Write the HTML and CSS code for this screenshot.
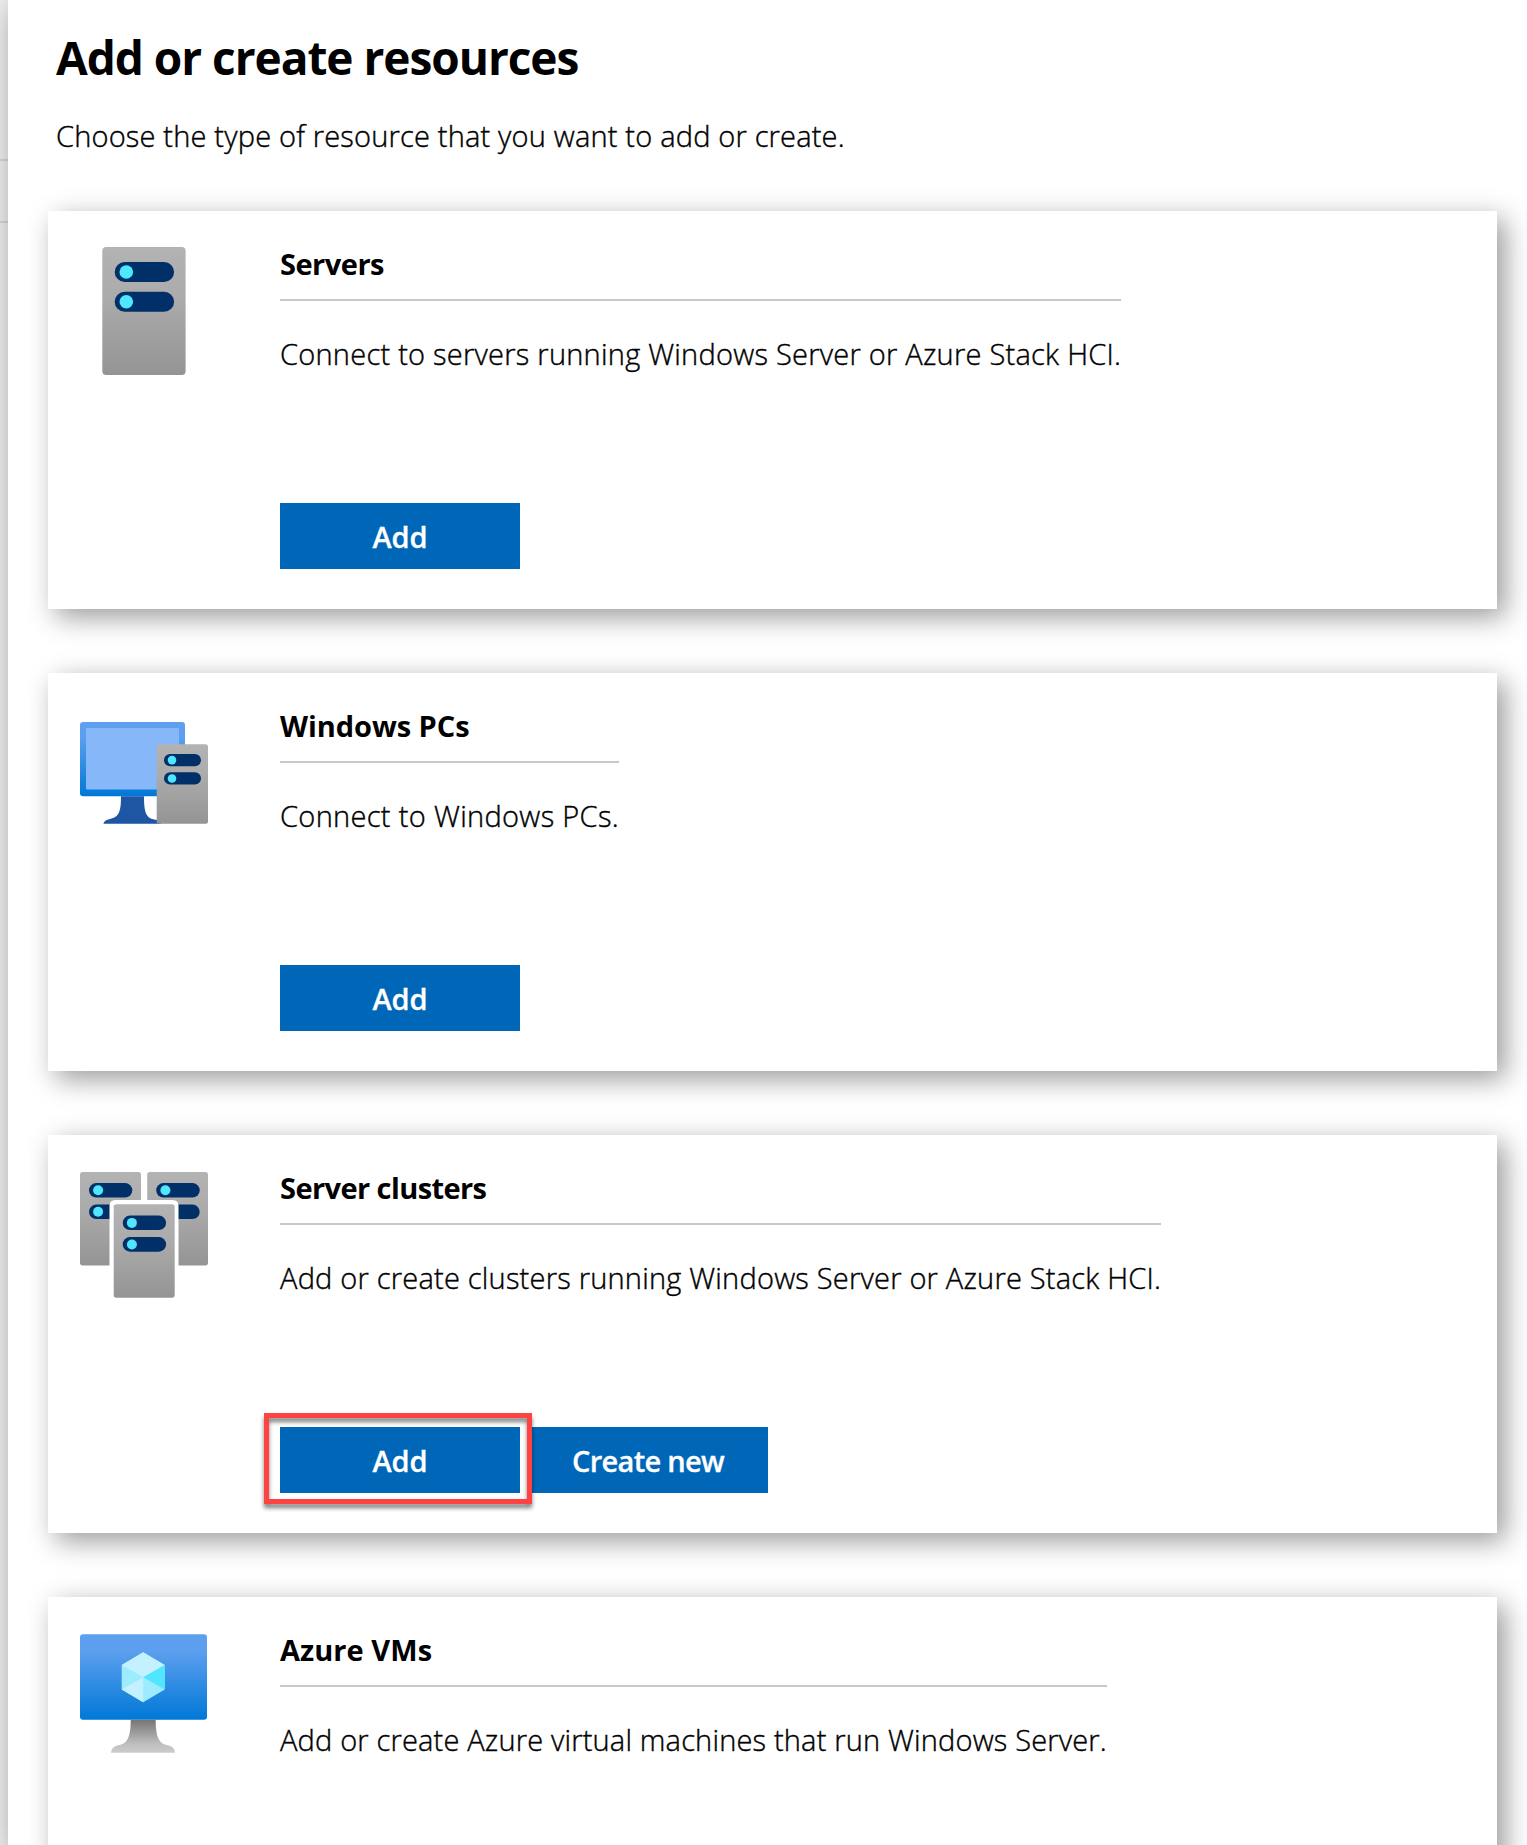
FILE: index.html
```html
<!DOCTYPE html>
<html lang="en">
<head>
<meta charset="utf-8">
<title>Add or create resources</title>
<link rel="stylesheet" href="styles.css">
</head>
<body>
<div class="backdrop">
  <div class="backdrop-row"></div>
  <div class="backdrop-row"></div>
</div>
<main class="panel">
  <h1 class="title">Add or create resources</h1>
  <p class="subtitle">Choose the type of resource that you want to add or create.</p>

  <div class="cards">
    <section class="card">
      <svg class="icon" viewBox="0 0 128 128" aria-hidden="true">
        <defs>
          <linearGradient id="case" x1="0" y1="0" x2="0" y2="1">
            <stop offset="0" stop-color="#b3b3b3"/><stop offset=".4" stop-color="#ababab"/><stop offset="1" stop-color="#949494"/>
          </linearGradient>
          <linearGradient id="screen" x1="0" y1="0" x2="0" y2="1">
            <stop offset="0" stop-color="#5ea0ef"/><stop offset=".2" stop-color="#5c9fee"/><stop offset="1" stop-color="#0078d7"/>
          </linearGradient>
          <linearGradient id="stand" x1="0" y1="0" x2="0" y2="1">
            <stop offset="0" stop-color="#757575"/><stop offset=".75" stop-color="#c0c0c0"/><stop offset="1" stop-color="#cccccc"/>
          </linearGradient>
        </defs>
        <rect x="22.3" y="0" width="83.3" height="128" rx="4" fill="url(#case)"/>
        <rect x="34.7" y="15" width="59.4" height="20" rx="10" fill="#003067"/>
        <rect x="34.7" y="44.8" width="59.4" height="20" rx="10" fill="#003067"/>
        <circle cx="46.3" cy="25" r="6.8" fill="#50e6ff"/>
        <circle cx="46.3" cy="54.8" r="6.8" fill="#50e6ff"/>
      </svg>
      <div class="body">
        <div class="info">
          <h2 class="name name-servers">Servers</h2>
          <p class="desc desc-servers">Connect to servers running Windows Server or Azure Stack HCI.</p>
        </div>
        <div class="actions"><button class="btn">Add</button></div>
      </div>
    </section>

    <section class="card">
      <svg class="icon" viewBox="0 0 128 128" aria-hidden="true">
        <rect x="0" y="13" width="105" height="74.3" rx="3" fill="url(#screen)"/>
        <rect x="6" y="19" width="93" height="61.5" rx="1" fill="#86b7f9"/>
        <path d="M41 87.3H64C64 103 66 109 74 110.5Q81 111 81 114.7H23.4Q24 111 30 110C39 108 41 103 41 87.3Z" fill="#1f56a4"/>
        <rect x="76.7" y="35.3" width="51.3" height="79.4" rx="2.5" fill="url(#case)"/>
        <rect x="84" y="45" width="37" height="12.3" rx="6.15" fill="#003067"/>
        <rect x="84" y="63.3" width="37" height="12.3" rx="6.15" fill="#003067"/>
        <circle cx="92" cy="51.1" r="4.3" fill="#50e6ff"/>
        <circle cx="92" cy="69.5" r="4.3" fill="#50e6ff"/>
      </svg>
      <div class="body">
        <div class="info">
          <h2 class="name name-pcs">Windows PCs</h2>
          <p class="desc desc-pcs">Connect to Windows PCs.</p>
        </div>
        <div class="actions"><button class="btn">Add</button></div>
      </div>
    </section>

    <section class="card">
      <svg class="icon" viewBox="0 0 128 128" aria-hidden="true">
        <rect x="0" y="1" width="61" height="93.5" rx="2.7" fill="url(#case)"/>
        <rect x="9" y="12" width="43.3" height="14.6" rx="7.3" fill="#003067"/>
        <rect x="9" y="33.5" width="43.3" height="14.6" rx="7.3" fill="#003067"/>
        <circle cx="18.1" cy="19.3" r="5" fill="#50e6ff"/>
        <circle cx="18.1" cy="40.8" r="5" fill="#50e6ff"/>
        <rect x="67.2" y="1" width="60.8" height="93.5" rx="2.7" fill="url(#case)"/>
        <rect x="76.2" y="12" width="43.5" height="14.6" rx="7.3" fill="#003067"/>
        <rect x="76.2" y="33.5" width="43.5" height="14.6" rx="7.3" fill="#003067"/>
        <circle cx="85.4" cy="19.3" r="5" fill="#50e6ff"/>
        <path d="M29.5 128V35Q29.5 29 35.5 29H92.5Q98.5 29 98.5 35V128Z" fill="#fff"/>
        <rect x="33.7" y="33.3" width="61" height="93.5" rx="2.7" fill="url(#case)"/>
        <rect x="42.7" y="44.5" width="43.4" height="14.6" rx="7.3" fill="#003067"/>
        <rect x="42.7" y="66.1" width="43.4" height="14.6" rx="7.3" fill="#003067"/>
        <circle cx="51.9" cy="51.9" r="5" fill="#50e6ff"/>
        <circle cx="51.9" cy="73.5" r="5" fill="#50e6ff"/>
      </svg>
      <div class="body">
        <div class="info">
          <h2 class="name name-clusters">Server clusters</h2>
          <p class="desc desc-clusters">Add or create clusters running Windows Server or Azure Stack HCI.</p>
        </div>
        <div class="actions">
          <div class="marked"><button class="btn">Add</button></div>
          <button class="btn btn-create">Create new</button>
        </div>
      </div>
    </section>

    <section class="card">
      <svg class="icon" viewBox="0 0 128 128" aria-hidden="true">
        <rect x="0" y="1.2" width="127" height="85.5" rx="3" fill="url(#screen)"/>
        <path d="M63.2 19.3L84.7 31.9V56.6L63.2 69.2L41.7 56.6V31.9Z" fill="#9cebff"/>
        <path d="M63.2 19.3L84.7 31.9L63.2 44.3L41.7 31.9Z" fill="#c3f1ff"/>
        <path d="M84.7 31.9V56.6L63.2 44.3Z" fill="#50e6ff"/>
        <path d="M63.2 44.3V69.2L41.7 56.6Z" fill="#c3f1ff"/>
        <path d="M50.7 86.7H75.7C75.7 104 79 111 88 112.3Q94.5 113.5 95 119.7H31Q31.5 113.5 38 112.3C47.5 111 50.7 104 50.7 86.7Z" fill="url(#stand)"/>
      </svg>
      <div class="body">
        <div class="info">
          <h2 class="name name-vms">Azure VMs</h2>
          <p class="desc desc-vms">Add or create Azure virtual machines that run Windows Server.</p>
        </div>
      </div>
    </section>
  </div>
</main>
</body>
</html>
```
FILE: styles.css
```css
*, *::after { box-sizing: border-box; }

body {
  margin: 0;
  height: 1845px;
  overflow: hidden;
  display: flex;
  background: #ececec;
  color: #000;
  font-family: "Open Sans", "Noto Sans", sans-serif;
}

.backdrop {
  width: 8px;
  flex: none;
  padding-top: 159px;
}

.backdrop-row {
  height: 62px;
  border-top: 2px solid #d4d4d4;
}

.panel {
  flex: 1;
  height: 1845px;
  padding: 27px 30px 0 40px;
  overflow: hidden;
  background: #fff;
  box-shadow: 8px 8px 28px rgba(0, 0, 0, .45);
}

.title {
  margin: 0 0 29px 8px;
  font-size: 46px;
  line-height: 60px;
  font-weight: 700;
  letter-spacing: -1.03px;
}

.subtitle {
  margin: 0 0 55px 8px;
  font-size: 29px;
  line-height: 40px;
  font-weight: 300;
  letter-spacing: .18px;
  -webkit-text-stroke: .4px #000;
}

.cards {
  display: flex;
  flex-direction: column;
  gap: 64px;
}

.card {
  display: flex;
  flex: none;
  gap: 72px;
  height: 398px;
  padding: 32px 32px 40px;
  background: #fff;
  box-shadow: 8px 8px 26px rgba(0, 0, 0, .4);
}

.icon {
  flex: none;
  width: 128px;
  height: 128px;
  margin-top: 4px;
}

.body {
  flex: 1;
  display: flex;
  flex-direction: column;
  justify-content: space-between;
  align-items: flex-start;
}

.name {
  margin: 0 0 33px;
  padding: 1px 0 15px;
  border-bottom: 2px solid #c8c8c8;
  font-size: 29px;
  line-height: 40px;
  font-weight: 700;
}

.desc {
  margin: 0;
  font-size: 29px;
  line-height: 40px;
  font-weight: 300;
  -webkit-text-stroke: .4px #000;
  white-space: nowrap;
}

.name-servers { letter-spacing: -.5px; }
.name-pcs { letter-spacing: -.05px; }
.name-clusters { letter-spacing: -.58px; }
.name-vms { letter-spacing: .05px; }

.desc-servers { letter-spacing: .243px; }
.desc-pcs { letter-spacing: .32px; }
.desc-clusters { letter-spacing: .213px; }
.desc-vms { letter-spacing: .175px; }

.actions {
  display: flex;
  gap: 8px;
}

.btn {
  display: block;
  width: 240px;
  height: 66px;
  padding: 1px 0 0;
  border: 0;
  background: #0067b8;
  color: #fff;
  font: 600 29px/40px "Open Sans", "Noto Sans", sans-serif;
  letter-spacing: -.1px;
  -webkit-text-stroke: .3px #fff;
}

.btn-create { letter-spacing: -.7px; }

.marked { position: relative; }

/* Callout frame drawn over the button and its neighbour */
.marked::after {
  content: "";
  position: absolute;
  left: -16px;
  top: -14px;
  width: 268px;
  height: 91px;
  border: 5px solid #ff4343;
  filter: drop-shadow(0 4px 2px rgba(0, 0, 0, .5));
}
```
